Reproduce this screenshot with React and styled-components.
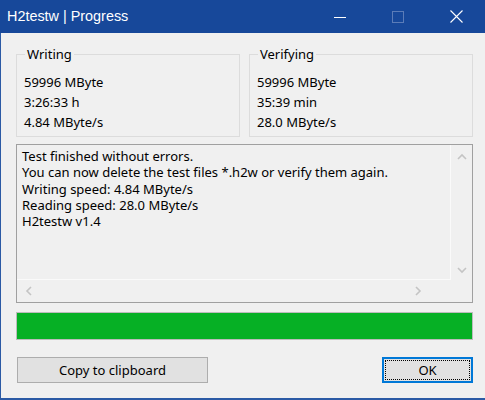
import React from 'react';
import styled, { createGlobalStyle } from 'styled-components';

const Global = createGlobalStyle`
  html, body {
    margin: 0;
    padding: 0;
    background: #f0f0f0;
  }
  * {
    box-sizing: border-box;
  }
`

const Window = styled.div`
  width: 485px;
  height: 400px;
  display: flex;
  flex-direction: column;
  background: #f0f0f0;
  border-left: 1px solid #2b5aa5;
  border-bottom: 2px solid #2b5aa5;
  font-family: "Noto Sans", "Liberation Sans", Arial, sans-serif;
  font-size: 13px;
  color: #000;
`

const TitleBar = styled.div`
  height: 33px;
  flex: none;
  display: flex;
  align-items: center;
  background: #17489a;
  color: #fff;
  margin-left: -1px;
`

const Title = styled.div`
  flex: 1;
  padding-left: 7px;
  padding-bottom: 2px;
  font-family: "Liberation Sans", Arial, sans-serif;
  font-size: 14.4px;
`

const Caption = styled.div`
  width: 58px;
  height: 33px;
  display: flex;
  align-items: center;
  justify-content: center;
  color: ${p => (p.$disabled ? '#5b7cb8' : '#ffffff')};
`

const Content = styled.div`
  flex: 1;
  display: flex;
  flex-direction: column;
  padding: 14px 12px 0 15px;
`

const GroupRow = styled.div`
  display: flex;
  gap: 9px;
`

const Group = styled.fieldset`
  margin: 0;
  width: 224px;
  height: 90px;
  border: 1px solid #dcdcdc;
  padding: 10px 0 0 7px;
  display: flex;
  flex-direction: column;
`

const Legend = styled.legend`
  padding: 0 2px;
  margin-left: 1px;
  line-height: 15px;
`

const Value = styled.div`
  height: 20px;
  line-height: 20px;
`

const TextBox = styled.div`
  margin-top: 7px;
  height: 159px;
  width: 457px;
  border: 1px solid #a0a0a0;
  display: grid;
  grid-template-columns: 1fr 21px;
  grid-template-rows: 1fr 22px;
`

const TextArea = styled.div`
  padding: 3px 5px;
  line-height: 16.3px;
  border-right: 1px solid #fafafa;
  border-bottom: 1px solid #fafafa;
  white-space: pre;
`

const VScroll = styled.div`
  display: flex;
  flex-direction: column;
  justify-content: space-between;
  align-items: center;
  padding: 8px 0 6px;
`

const HScroll = styled.div`
  display: flex;
  justify-content: space-between;
  align-items: center;
  padding: 0 29px 0 8px;
`

const Progress = styled.div`
  margin-top: 9px;
  width: 457px;
  height: 28px;
  border: 1px solid #bcbcbc;
  background: #e6e6e6;
`

const Fill = styled.div`
  height: 100%;
  background: #06b025;
`

const ButtonRow = styled.div`
  margin-top: 17px;
  display: flex;
  justify-content: space-between;
  padding-left: 1px;
  width: 457px;
`

const Button = styled.button`
  width: ${p => p.$width}px;
  height: 26px;
  margin: 0;
  padding: 0;
  font: inherit;
  color: #000;
  background: #e1e1e1;
  border: ${p => (p.$default ? '2px solid #0078d7' : '1px solid #adadad')};
  display: flex;
  align-items: center;
  justify-content: center;
`

const Focus = styled.span`
  align-self: stretch;
  flex: 1;
  margin: 1px;
  border: 1px dotted #000;
  display: flex;
  align-items: center;
  justify-content: center;
`

const Arrow = ({ dir }) => {
  const paths = {
    up: 'M1 6 L5 2 L9 6',
    down: 'M1 2 L5 6 L9 2',
    left: 'M6 1 L2 5 L6 9',
    right: 'M2 1 L6 5 L2 9',
  };
  const vertical = dir === 'up' || dir === 'down';
  return (
    <svg width={vertical ? 10 : 8} height={vertical ? 8 : 10} viewBox={vertical ? '0 0 10 8' : '0 0 8 10'}>
      <path d={paths[dir]} fill="none" stroke="#c4c4c4" strokeWidth="1.6" />
    </svg>
  );
};

const log = `Test finished without errors.
You can now delete the test files *.h2w or verify them again.
Writing speed: 4.84 MByte/s
Reading speed: 28.0 MByte/s
H2testw v1.4`

export default function App() {
  return (
    <>
      <Global />
      <Window>
        <TitleBar>
          <Title>H2testw | Progress</Title>
          <Caption>
            <svg width="12" height="12" viewBox="0 0 12 12">
              <path d="M0 6.5 H12" stroke="currentColor" strokeWidth="1" />
            </svg>
          </Caption>
          <Caption $disabled>
            <svg width="12" height="12" viewBox="0 0 12 12">
              <rect x="0.5" y="0.5" width="11" height="11" fill="none" stroke="currentColor" />
            </svg>
          </Caption>
          <Caption>
            <svg width="13" height="13" viewBox="0 0 13 13">
              <path d="M0.5 0.5 L12.5 12.5 M12.5 0.5 L0.5 12.5" stroke="currentColor" strokeWidth="1.1" />
            </svg>
          </Caption>
        </TitleBar>
        <Content>
          <GroupRow>
            <Group>
              <Legend>Writing</Legend>
              <Value>59996 MByte</Value>
              <Value>3:26:33 h</Value>
              <Value>4.84 MByte/s</Value>
            </Group>
            <Group>
              <Legend>Verifying</Legend>
              <Value>59996 MByte</Value>
              <Value>35:39 min</Value>
              <Value>28.0 MByte/s</Value>
            </Group>
          </GroupRow>
          <TextBox>
            <TextArea>{log}</TextArea>
            <VScroll>
              <Arrow dir="up" />
              <Arrow dir="down" />
            </VScroll>
            <HScroll>
              <Arrow dir="left" />
              <Arrow dir="right" />
            </HScroll>
            <div />
          </TextBox>
          <Progress>
            <Fill style={{ width: '100%' }} />
          </Progress>
          <ButtonRow>
            <Button $width={191}>Copy to clipboard</Button>
            <Button $width={91} $default>
              <Focus>OK</Focus>
            </Button>
          </ButtonRow>
        </Content>
      </Window>
    </>
  );
}
